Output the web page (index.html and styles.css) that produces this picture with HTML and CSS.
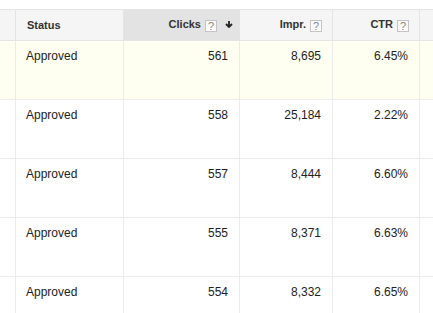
FILE: index.html
```html
<!DOCTYPE html>
<html>
<head>
<meta charset="utf-8">
<link rel="stylesheet" href="styles.css">
</head>
<body>
<div class="wrap">
<table class="grid">
  <colgroup>
    <col class="c0"><col class="c1"><col class="c2"><col class="c3"><col class="c4"><col class="c5">
  </colgroup>
  <thead>
    <tr>
      <th class="first"></th>
      <th class="left">Status</th>
      <th class="num sorted">Clicks<span class="help">?</span><svg class="arrow" width="8" height="7" viewBox="0 0 8 7"><path d="M4 0V5.5M1 3L4 6L7 3" fill="none" stroke="#222" stroke-width="1.8"/></svg></th>
      <th class="num">Impr.<span class="help">?</span></th>
      <th class="num">CTR<span class="help">?</span></th>
      <th></th>
    </tr>
  </thead>
  <tbody>
    <tr class="hl"><td class="first"></td><td>Approved</td><td class="num">561</td><td class="num">8,695</td><td class="num">6.45%</td><td></td></tr>
    <tr><td class="first"></td><td>Approved</td><td class="num">558</td><td class="num">25,184</td><td class="num">2.22%</td><td></td></tr>
    <tr><td class="first"></td><td>Approved</td><td class="num">557</td><td class="num">8,444</td><td class="num">6.60%</td><td></td></tr>
    <tr><td class="first"></td><td>Approved</td><td class="num">555</td><td class="num">8,371</td><td class="num">6.63%</td><td></td></tr>
    <tr><td class="first"></td><td>Approved</td><td class="num">554</td><td class="num">8,332</td><td class="num">6.65%</td><td></td></tr>
  </tbody>
</table>
</div>
</body>
</html>
```
FILE: styles.css
```css
html, body {
  margin: 0;
  padding: 0;
  background: #fff;
  overflow: hidden;
}
.wrap {
  padding-top: 9px;
  width: 433px;
  overflow: hidden;
}
.grid {
  border-collapse: separate;
  border-spacing: 0;
  table-layout: fixed;
  width: 520px;
  font-family: "Liberation Sans", Arial, sans-serif;
  color: #222;
}
.c0 { width: 15px; }
.c1 { width: 108px; }
.c2 { width: 116px; }
.c3 { width: 93px; }
.c4 { width: 87px; }
.c5 { width: 101px; }
.grid th {
  height: 30px;
  padding: 0 10px 0 11px;
  background: #f5f5f5;
  border-top: 1px solid #e4e4e4;
  border-bottom: 1px solid #e4e4e4;
  border-left: 1px solid #e4e4e4;
  font-size: 11px;
  font-weight: bold;
  color: #333;
  text-align: left;
  vertical-align: middle;
  white-space: nowrap;
  line-height: 13px;
}
.grid th.first, .grid td.first {
  border-left: none;
  padding: 0;
}
.grid th.num { text-align: right; }
.grid th.sorted {
  background: #e3e3e3;
  padding-right: 6px;
}
.help {
  display: inline-block;
  box-sizing: border-box;
  width: 12px;
  height: 12px;
  margin-left: 4px;
  border: 1px solid #c4c4c4;
  background: #fafafa;
  color: #888;
  font-size: 11px;
  font-weight: normal;
  line-height: 10px;
  text-align: center;
  vertical-align: -2px;
}
.arrow {
  margin-left: 8px;
  vertical-align: 0;
}
.grid td {
  box-sizing: content-box;
  height: 50px;
  padding: 8px 10px 0 10px;
  border-left: 1px solid #ececec;
  border-bottom: 1px solid #ececec;
  font-size: 12px;
  line-height: 15px;
  vertical-align: top;
  white-space: nowrap;
}
.grid td.num { text-align: right; padding-right: 11px; }
.grid tr.hl td { background: #fefff0; }
```
